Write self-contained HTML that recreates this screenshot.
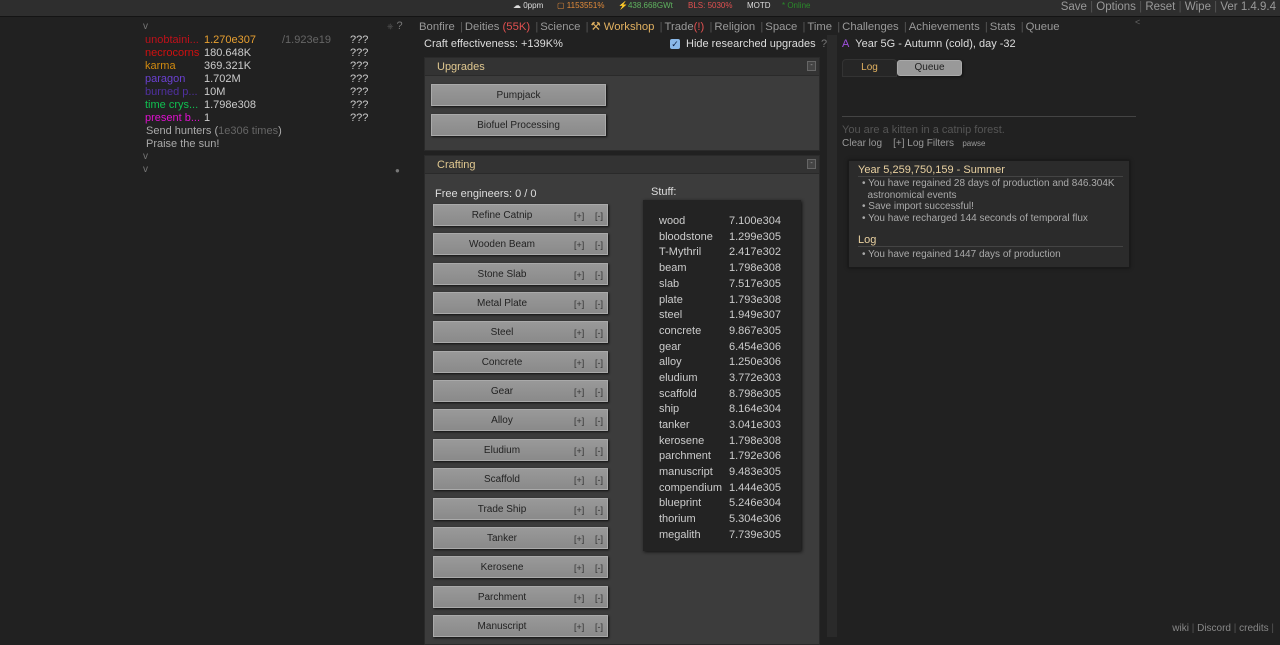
<!DOCTYPE html>
<html><head><meta charset="utf-8"><style>
*{margin:0;padding:0;box-sizing:border-box}
body{width:1280px;height:637px;background:#212121;color:#ccc;font-family:"Liberation Sans",sans-serif;font-size:11px;position:relative;overflow:hidden}
.a{position:absolute;white-space:nowrap}
#top{position:absolute;left:0;top:0;width:1280px;height:17px;background:#2e2e2e;border-bottom:1px solid #141414}
.res div{position:absolute;white-space:nowrap;font-size:11px}
.tabs{font-size:11.3px;color:#999}
.tabs span{color:#555;margin:0 2px}
.panel{position:absolute;left:424px;width:396px;background:#3c3c3c;border:1px solid #2a2a2a}
.ph{height:18px;background:#333;border-bottom:1px solid #2a2a2a;color:#e0c890;font-size:11px;padding:3px 0 0 12px;position:relative}
.ph i{position:absolute;right:3px;top:3px;width:9px;height:10px;border:1px solid #666;background:#444;font-style:normal;font-size:7px;color:#aaa;text-align:center;line-height:8px}
.btn{position:absolute;background:linear-gradient(#999,#8a8a8a);border:1px solid #aaa;box-shadow:1px 1px 2px #111;color:#222;font-size:10px;text-align:center;height:22px;line-height:20px}
.btn span,.btn b{position:absolute;top:5px;line-height:12px}
.btn b{font-weight:normal;font-size:9px;color:#333}
.stuff div{position:absolute;left:16px;font-size:11px;color:#ccc}
.stuff span{position:absolute;left:70px}
</style></head><body>
<div id="top"></div>
<div class="a" style="left:513px;top:1px;font-size:8px;color:#ddd">☁ 0ppm</div>
<div class="a" style="left:557px;top:1px;font-size:8px;color:#e08a3a">▢ 1153551%</div>
<div class="a" style="left:618px;top:1px;font-size:8px;color:#5fb35f">⚡438.668GWt</div>
<div class="a" style="left:688px;top:1px;font-size:8px;color:#e05050">BLS: 5030%</div>
<div class="a" style="left:747px;top:1px;font-size:8px;color:#ddd">MOTD</div>
<div class="a" style="left:782px;top:1px;font-size:8px;color:#2a8a2a">* Online</div>
<div class="a" style="right:4px;top:1px;font-size:11.5px;color:#999">Save <span style="color:#555">|</span> Options <span style="color:#555">|</span> Reset <span style="color:#555">|</span> Wipe <span style="color:#555">|</span> Ver 1.4.9.4</div>

<div class="a" style="left:143px;top:21px;color:#777;font-size:10px">v</div>
<div class="res">
<div style="left:145px;top:34px;color:#c0101a">unobtaini...</div><div style="left:204px;top:34px;color:#e8a030">1.270e307</div><div style="left:282px;top:34px;color:#666">/1.923e19</div><div style="left:350px;top:34px">???</div>
<div style="left:145px;top:47px;color:#d01010">necrocorns</div><div style="left:204px;top:47px">180.648K</div><div style="left:350px;top:47px">???</div>
<div style="left:145px;top:60px;color:#d08a10">karma</div><div style="left:204px;top:60px">369.321K</div><div style="left:350px;top:60px">???</div>
<div style="left:145px;top:73px;color:#6a40d0">paragon</div><div style="left:204px;top:73px">1.702M</div><div style="left:350px;top:73px">???</div>
<div style="left:145px;top:86px;color:#5030a0">burned p...</div><div style="left:204px;top:86px">10M</div><div style="left:350px;top:86px">???</div>
<div style="left:145px;top:99px;color:#10c050">time crys...</div><div style="left:204px;top:99px">1.798e308</div><div style="left:350px;top:99px">???</div>
<div style="left:145px;top:112px;color:#e010d0">present b...</div><div style="left:204px;top:112px">1</div><div style="left:350px;top:112px">???</div>
<div style="left:146px;top:125px;color:#aaa">Send hunters (<span style="color:#666">1e306 times</span>)</div>
<div style="left:146px;top:138px;color:#aaa">Praise the sun!</div>
</div>
<div class="a" style="left:143px;top:151px;color:#777;font-size:10px">v</div>
<div class="a" style="left:143px;top:164px;color:#777;font-size:10px">v</div>
<div class="a" style="left:395px;top:166px;color:#777;font-size:8px">●</div>

<div class="a tabs" style="left:387px;top:20px;color:#777;font-size:11px"><span style="margin:0;font-size:8px">⎈</span> ?</div>
<div class="a tabs" style="left:419px;top:20px">Bonfire <span>|</span>Deities <b style="font-weight:normal;color:#e05050">(55K)</b> <span>|</span>Science <span>|</span><b style="font-weight:normal;color:#e0b060">⚒ Workshop</b> <span>|</span>Trade<b style="font-weight:normal;color:#e05050">(!)</b> <span>|</span>Religion <span>|</span>Space <span>|</span>Time <span>|</span>Challenges <span>|</span>Achievements <span>|</span>Stats <span>|</span>Queue</div>
<div class="a" style="left:1135px;top:17px;color:#666;font-size:9px">&lt;</div>

<div class="a" style="left:424px;top:38px;font-size:11px;color:#ddd">Craft effectiveness: +139K%</div>
<div class="a" style="left:670px;top:39px;width:10px;height:10px;background:#8ab8e8;border-radius:2px;font-size:9px;color:#124;line-height:10px;text-align:center">✓</div>
<div class="a" style="left:686px;top:38px;font-size:11px;color:#ddd">Hide researched upgrades</div>
<div class="a" style="left:821px;top:38px;font-size:11px;color:#777">?</div>

<div class="a" style="left:827px;top:35px;width:10px;height:602px;background:#2a2a2a"></div>

<div class="panel" style="top:57px;height:94px"><div class="ph">Upgrades<i>-</i></div></div>
<div class="btn" style="left:431px;top:84px;width:175px"><span style="left:0;width:173px">Pumpjack</span></div>
<div class="btn" style="left:431px;top:114px;width:175px"><span style="left:0;width:173px">Biofuel Processing</span></div>

<div class="panel" style="top:155px;height:490px"><div class="ph">Crafting<i>-</i></div></div>
<div class="a" style="left:435px;top:188px;font-size:11px;color:#ddd">Free engineers: 0 / 0</div>
<div class="a" style="left:651px;top:186px;font-size:11px;color:#ddd">Stuff:</div>
<div id="cb"></div>
<div class="a stuff" style="left:643px;top:200px;width:158px;height:351px;background:#232323;box-shadow:1px 1px 3px #111">
<div style="top:15px">wood<span>7.100e304</span></div>
<div style="top:31px">bloodstone<span>1.299e305</span></div>
<div style="top:46px">T-Mythril<span>2.417e302</span></div>
<div style="top:62px">beam<span>1.798e308</span></div>
<div style="top:78px">slab<span>7.517e305</span></div>
<div style="top:94px">plate<span>1.793e308</span></div>
<div style="top:109px">steel<span>1.949e307</span></div>
<div style="top:125px">concrete<span>9.867e305</span></div>
<div style="top:141px">gear<span>6.454e306</span></div>
<div style="top:156px">alloy<span>1.250e306</span></div>
<div style="top:172px">eludium<span>3.772e303</span></div>
<div style="top:188px">scaffold<span>8.798e305</span></div>
<div style="top:203px">ship<span>8.164e304</span></div>
<div style="top:219px">tanker<span>3.041e303</span></div>
<div style="top:235px">kerosene<span>1.798e308</span></div>
<div style="top:250px">parchment<span>1.792e306</span></div>
<div style="top:266px">manuscript<span>9.483e305</span></div>
<div style="top:282px">compendium<span>1.444e305</span></div>
<div style="top:297px">blueprint<span>5.246e304</span></div>
<div style="top:313px">thorium<span>5.304e306</span></div>
<div style="top:329px">megalith<span>7.739e305</span></div>
</div>

<div class="a" style="left:842px;top:38px;font-size:11px;color:#ddd"><span style="color:#a050e0">A</span>&nbsp; Year 5G - Autumn (cold), day -32</div>
<div class="a" style="left:842px;top:59px;width:55px;height:18px;background:#262626;border:1px solid #333;border-radius:4px 4px 0 0;color:#e0b060;font-size:10px;text-align:center;line-height:16px">Log</div>
<div class="a" style="left:897px;top:60px;width:65px;height:16px;background:#999;border:1px solid #aaa;border-radius:3px;color:#222;font-size:10px;text-align:center;line-height:14px;box-shadow:1px 1px 2px #111">Queue</div>
<div class="a" style="left:842px;top:116px;width:294px;height:1px;background:#444"></div>
<div class="a" style="left:842px;top:124px;font-size:11px;color:#555">You are a kitten in a catnip forest.</div>
<div class="a" style="left:842px;top:138px;font-size:10px;color:#999">Clear log &nbsp;&nbsp; [+] Log Filters &nbsp;&nbsp;<span style="font-size:8px">pawse</span></div>
<div class="a" style="left:848px;top:160px;width:282px;height:108px;background:#2b2b2b;border:1px solid #1a1a1a;box-shadow:0 0 3px #111"></div>
<div class="a" style="left:858px;top:164px;width:265px;border-bottom:1px solid #444;font-size:11px;color:#e8d0a0">Year 5,259,750,159 - Summer</div>
<div class="a" style="left:862px;top:178px;font-size:10px;color:#aaa;line-height:11.5px">• You have regained 28 days of production and 846.304K<br>&nbsp;&nbsp;astronomical events<br>• Save import successful!<br>• You have recharged 144 seconds of temporal flux</div>
<div class="a" style="left:858px;top:234px;width:265px;border-bottom:1px solid #444;font-size:11px;color:#e8d0a0">Log</div>
<div class="a" style="left:862px;top:249px;font-size:10px;color:#aaa">• You have regained 1447 days of production</div>

<div class="a" style="right:6px;top:623px;font-size:10px;color:#888">wiki <span style="color:#555">|</span> Discord <span style="color:#555">|</span> credits <span style="color:#555">|</span></div>

<script>
var n=["Refine Catnip","Wooden Beam","Stone Slab","Metal Plate","Steel","Concrete","Gear","Alloy","Eludium","Scaffold","Trade Ship","Tanker","Kerosene","Parchment","Manuscript"],h="";
for(var i=0;i<n.length;i++){var t=Math.round(204+i*29.35);h+='<div class="btn" style="left:433px;top:'+t+'px;width:175px"><span style="left:0;width:136px;text-align:center">'+n[i]+'</span><b style="left:140px">[+]</b><b style="left:161px">[-]</b></div>';}
document.getElementById("cb").innerHTML=h;
</script>
</body></html>
